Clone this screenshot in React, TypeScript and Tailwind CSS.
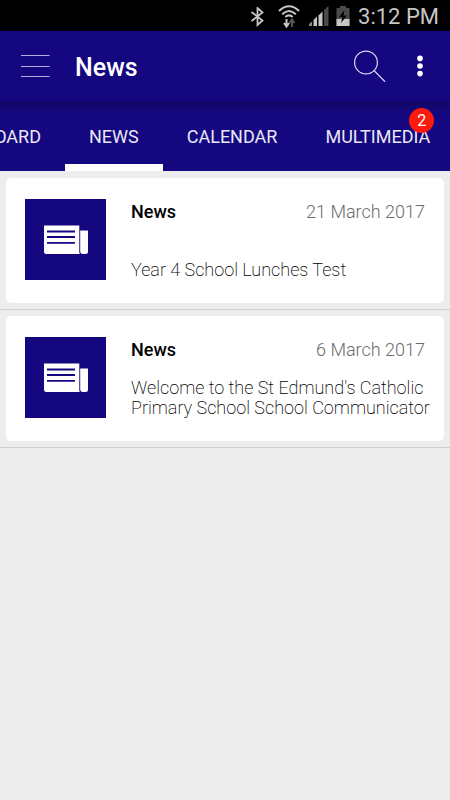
import React from 'react';

const TABS = [
  { label: 'DASHBOARD', clipped: true },
  { label: 'NEWS', active: true },
  { label: 'CALENDAR' },
  { label: 'MULTIMEDIA', badge: 2 },
];

const NEWS = [
  { id: 1, type: 'News', date: '21 March 2017', text: 'Year 4 School Lunches Test' },
  {
    id: 2,
    type: 'News',
    date: '6 March 2017',
    text: "Welcome to the St Edmund's Catholic Primary School School Communicator",
  },
];

function StatusBar() {
  return (
    <div className="flex h-[31px] items-center justify-end bg-black pt-0.5 pr-[11px] text-[#c6c6c6]">
      {/* bluetooth */}
      <svg width="14" height="20" viewBox="0 0 14 20" fill="none" stroke="currentColor" strokeWidth="1.8">
        <path d="M1.5 5 L12.5 13.5 L7.5 18 V1 L12.5 5.5 L1.5 14" />
      </svg>
      {/* wifi with traffic arrows */}
      <svg className="ml-3.5" width="22" height="24" viewBox="0 0 22 24" fill="none" stroke="currentColor" strokeWidth="2">
        <path d="M1 6 Q11 -3.5 21 6" />
        <path d="M4.2 9.2 Q11 2.8 17.8 9.2" />
        <path d="M7.3 12 Q11 8.8 14.7 12" />
        <path d="M8.5 14 V21 M6 18 L8.5 21.5 L11 18" />
        <path d="M14 22 V15 M11.5 18 L14 14.5 L16.5 18" stroke="#555555" />
      </svg>
      {/* signal */}
      <svg className="ml-2" width="22" height="22" viewBox="0 0 22 22">
        <path d="M1 20 V18 L4 15.5 V20 Z" fill="#888888" />
        <path d="M5.5 20 V14 L9 10.5 V20 Z" fill="currentColor" />
        <path d="M10.5 20 V9.5 L14.5 5.5 V20 Z" fill="currentColor" />
        <path d="M16 20 V4 L20.5 0 V20 Z" fill="#4a4a4a" />
      </svg>
      {/* battery */}
      <svg className="ml-1.5" width="14" height="22" viewBox="0 0 14 22">
        <path d="M4 0 H10 V2 H13.5 V20 H0.5 V2 H4 Z" fill="#4a4a4a" />
        <path d="M0.5 13 H13.5 V20 H0.5 Z" fill="currentColor" />
        <path d="M8.5 4 L3 11 H6.5 L5 17 L11 9.5 H7.5 Z" fill="#000000" />
      </svg>
      <span className="ml-2 text-[22px] leading-none">3:12 PM</span>
    </div>
  );
}

function Header() {
  return (
    <header className="flex h-[70px] items-center bg-[#140780] pr-5 pl-5 text-white">
      <button type="button" aria-label="Menu">
        <svg width="30" height="24" viewBox="0 0 30 24" fill="none" stroke="#b4aede" strokeWidth="1">
          <path d="M1 1.5 H29.5 M1 12.5 H29.5 M1 22.5 H29.5" />
        </svg>
      </button>
      <h1 className="ml-[25px] flex-1 pt-0.5 text-[25px] leading-none font-medium">News</h1>
      <button type="button" aria-label="Search">
        <svg width="32" height="32" viewBox="0 0 32 32" fill="none" stroke="#dcdaf2" strokeWidth="1.2">
          <circle cx="12" cy="12.5" r="11.4" />
          <path d="M20 20.5 L31 31.7" />
        </svg>
      </button>
      <button type="button" aria-label="More options" className="ml-6">
        <svg width="20" height="22" viewBox="0 0 20 22" fill="currentColor">
          <circle cx="10" cy="3.4" r="2.8" />
          <circle cx="10" cy="11" r="2.8" />
          <circle cx="10" cy="18.6" r="2.8" />
        </svg>
      </button>
    </header>
  );
}

function TabBar() {
  return (
    <nav className="flex h-[70px] overflow-hidden bg-[#140780] bg-linear-to-b from-[#120763] to-[#140780] to-[12px] text-[#e9e8f4]">
      {TABS.map((tab) => (
        <button
          key={tab.label}
          type="button"
          aria-current={tab.active ? 'page' : undefined}
          className={`relative flex shrink-0 items-center border-b-[7px] px-6 pt-2 text-[18px] leading-none ${
            tab.active ? 'border-white' : 'border-transparent'
          } ${tab.clipped ? 'w-[65px] justify-end' : ''}`}
        >
          {tab.label}
          {tab.badge && (
            <span className="absolute top-[7px] right-5 flex size-[25px] items-center justify-center rounded-full bg-[#ff180c] text-base leading-none text-white">
              {tab.badge}
            </span>
          )}
        </button>
      ))}
    </nav>
  );
}

function NewspaperIcon() {
  return (
    <svg width="45" height="30" viewBox="0 0 45 30" fill="none">
      <path d="M1 0.5 H36.3 V27 Q36.3 28.5 37 29 H3.5 Q1 29 1 26.5 Z" fill="#ffffff" />
      <path d="M37.2 5.5 H45 V26.5 Q45 29 42.5 29 H39.7 Q37.2 29 37.2 26 Z" fill="#ffffff" />
      <path d="M4 6.5 H32 M4 12 H32 M4 17.8 H32" stroke="#140780" strokeWidth="1.8" />
    </svg>
  );
}

export default function App() {
  return (
    <div className="min-h-screen overflow-hidden bg-[#ededed] font-[Roboto,sans-serif]">
      <StatusBar />
      <Header />
      <TabBar />
      <ul className="pt-px">
        {NEWS.map((item) => (
          <li key={item.id} className="border-b border-[#d0d0d0] px-1.5 py-1.5">
            <article className="flex min-h-[125px] items-start gap-[25px] rounded-[5px] bg-white pt-[21px] pr-2 pb-[23px] pl-[19px]">
              <div className="flex size-[81px] shrink-0 items-center justify-center bg-[#140780]">
                <NewspaperIcon />
              </div>
              <div className="flex min-w-0 flex-1 flex-col self-stretch">
                <div className="flex justify-between pt-[3px] pr-[11px] text-[18px] leading-5">
                  <h2 className="font-medium text-black">{item.type}</h2>
                  <time className="font-light text-[#6c6c6c]">{item.date}</time>
                </div>
                <div className="mt-[18px] flex min-h-10 flex-1 items-end">
                  <p className="text-[18px] leading-5 font-extralight text-black">{item.text}</p>
                </div>
              </div>
            </article>
          </li>
        ))}
      </ul>
    </div>
  );
}
